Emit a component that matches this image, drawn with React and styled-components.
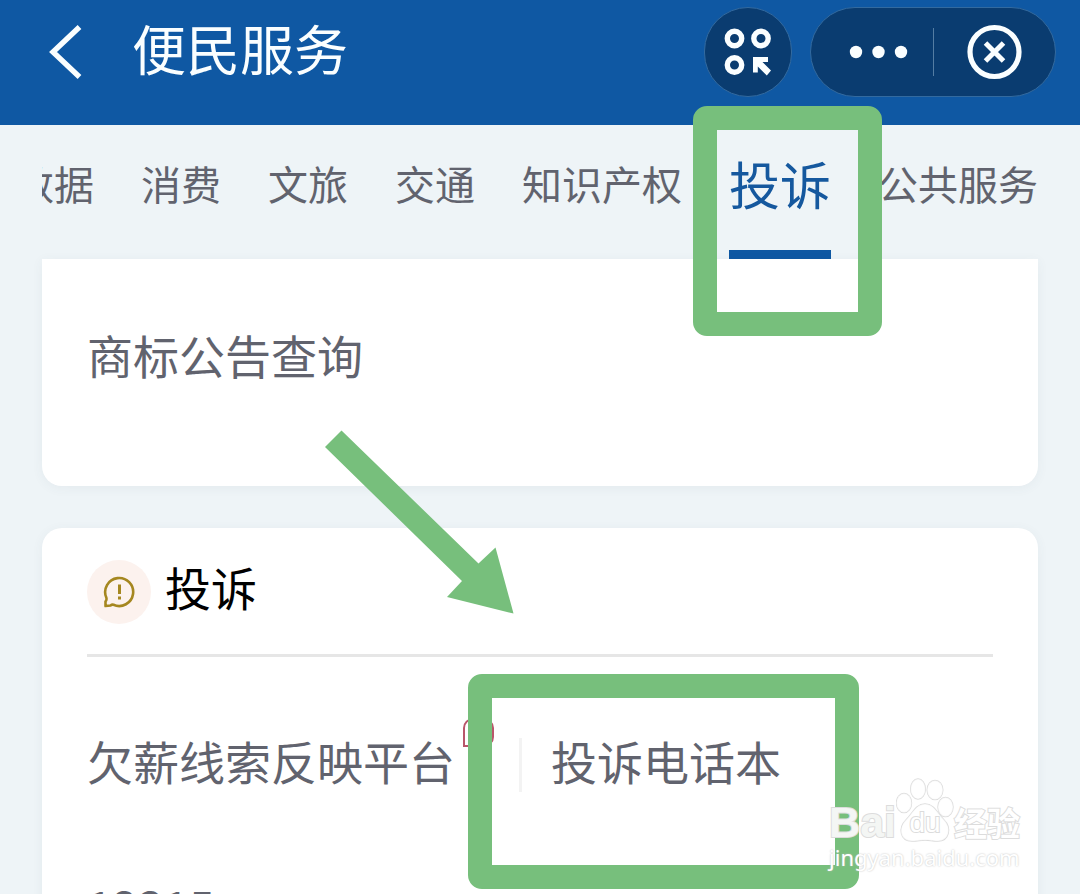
import React from 'react';
import styled, { createGlobalStyle } from 'styled-components';

const TABS = ['数据', '消费', '文旅', '交通', '知识产权', '投诉', '公共服务'];
const ACTIVE_TAB = '投诉';

const BackIcon = () => (
  <svg width="36" height="56" viewBox="0 0 36 56" fill="none" stroke="currentColor" strokeWidth="5.4">
    <path d="M31.500 3 L5 28 L31.500 53" />
  </svg>
);

const ScanIcon = () => (
  <svg width="48" height="48" viewBox="0 0 48 48" fill="none" stroke="currentColor" strokeWidth="5.4">
    <circle cx="10.500" cy="10.500" r="7.200" />
    <circle cx="37" cy="10.500" r="7.200" />
    <circle cx="10.500" cy="37" r="7.200" />
    <path
      d="M29 29 H44 V34 H38.500 L47 42.500 L42.800 47.500 L33.800 38.500 V44.500 H29 Z"
      fill="currentColor"
      stroke="none"
    />
  </svg>
);

const MoreIcon = () => (
  <svg width="60" height="14" viewBox="0 0 60 14" fill="currentColor">
    <circle cx="7" cy="7" r="6.2" />
    <circle cx="29.5" cy="7" r="6.2" />
    <circle cx="52" cy="7" r="6.2" />
  </svg>
);

const CloseIcon = () => (
  <svg width="56" height="56" viewBox="0 0 56 56" fill="none" stroke="currentColor">
    <circle cx="28.5" cy="28" r="24.5" strokeWidth="5.2" />
    <path d="M19.500 19 L37.500 37 M37.500 19 L19.500 37" strokeWidth="5" />
  </svg>
);

const ComplaintIcon = () => (
  <svg width="34" height="34" viewBox="0 0 34 34" fill="none" stroke="#a58720" strokeWidth="2.6">
    <path d="M3.500 31 V26.500 Q5 25 4.300 22.500 A14 14 0 1 1 11.500 29.800 Q10 29.300 8.500 30.500 Z" strokeLinejoin="round" />
    <path d="M17.500 9.500 V19" strokeWidth="3" />
    <path d="M17.500 21.500 V24.500" strokeWidth="3" />
  </svg>
);

const Arrow = () => (
  <svg width="190" height="184" viewBox="0 0 190 184" fill="#77bf7c">
    <path d="M16.500 0.500 L153.500 133.500 L170.500 117.500 L188.500 183.500 L122 167 L137 151 L0 17 Z" />
  </svg>
);

const Paw = () => (
  <svg width="58" height="66" viewBox="0 0 58 66" fill="currentColor" stroke="#dcdcdc" strokeWidth="1.4">
    <ellipse cx="8" cy="26" rx="7.500" ry="9.500" />
    <ellipse cx="22" cy="12" rx="7.300" ry="10" />
    <ellipse cx="39" cy="13" rx="7.800" ry="9.500" />
    <ellipse cx="49.500" cy="30" rx="7.500" ry="9.500" />
    <path d="M29 27 C38 27 41 36 48 43 C56 51 53 64 42 64 C36 64 34 63 29 63 C24 63 22 64 16 64 C4 64 2 51 10 43 C17 36 20 27 29 27 Z" />
  </svg>
);

const App = () => {
  return (
    <Page>
      <GlobalStyle />
      <Header>
        <BackButton type="button" aria-label="返回"><BackIcon /></BackButton>
        <Title>便民服务</Title>
        <RoundButton type="button" aria-label="扫一扫"><ScanIcon /></RoundButton>
        <Capsule>
          <CapsuleButton type="button" aria-label="更多"><MoreIcon /></CapsuleButton>
          <CapsuleDivider />
          <CapsuleButton type="button" aria-label="关闭"><CloseIcon /></CapsuleButton>
        </Capsule>
      </Header>

      <Tabs>
        {TABS.map((tab) => (
          <Tab key={tab} href="#" $active={tab === ACTIVE_TAB}>
            {tab}
            {tab === ACTIVE_TAB && <TabFrame />}
          </Tab>
        ))}
      </Tabs>

      <Sections>
        <Card $continued>
          <ServiceGrid>
            <Service href="#">商标公告查询</Service>
          </ServiceGrid>
        </Card>

        <Card>
          <CardHeader>
            <CardIcon><ComplaintIcon /></CardIcon>
            <CardTitle>投诉</CardTitle>
          </CardHeader>
          <ServiceGrid $spaced>
            <Service href="#">
              欠薪线索反映平台
              <Badge />
            </Service>
            <Service href="#" $divided>
              投诉电话本
              <ServiceFrame />
            </Service>
            <Service href="#">12315</Service>
          </ServiceGrid>
          <ArrowMark><Arrow /></ArrowMark>
        </Card>
      </Sections>

      <Watermark>
        <Brand>
          <BrandText>Bai</BrandText>
          <PawMark>
            <Paw />
            <PawText>du</PawText>
          </PawMark>
          <BrandName>经验</BrandName>
        </Brand>
        <Site>jingyan.baidu.com</Site>
      </Watermark>
    </Page>
  );
};

const GlobalStyle = createGlobalStyle`
  * {
    box-sizing: border-box;
  }

  body {
    margin: 0;
    background: #eef4f7;
    font-family: "Noto Sans CJK SC", sans-serif;
  }

  button {
    display: flex;
    align-items: center;
    justify-content: center;
    padding: 0;
    border: none;
    background: none;
    color: inherit;
    cursor: pointer;
  }

  a {
    color: inherit;
    text-decoration: none;
  }

  svg {
    display: block;
  }
`;

const Page = styled.div`
  position: relative;
  height: 100vh;
  overflow: hidden;
`;

const Header = styled.header`
  display: flex;
  align-items: center;
  padding: 7px 24px 28px 48px;
  background: #0f58a3;
  color: #fafeff;
`;

const BackButton = styled.button`
  width: 36px;
  height: 90px;
`;

const Title = styled.h1`
  flex: 1;
  margin: 0 0 8px 48px;
  font-size: 54px;
  line-height: 80px;
  font-weight: 400;
`;

const RoundButton = styled.button`
  && {
    width: 88px;
    height: 90px;
    border: 1px solid #336a9f;
    border-radius: 45px;
    background: #0a3c70;
  }
`;

const Capsule = styled.div`
  display: flex;
  align-items: center;
  width: 246px;
  height: 90px;
  margin-left: 18px;
  border: 1px solid #336a9f;
  border-radius: 45px;
  background: #0a3c70;
`;

const CapsuleButton = styled.button`
  width: 50%;
  height: 88px;

  &&:first-child {
    padding-left: 14px;
  }
`;

const CapsuleDivider = styled.span`
  flex: none;
  width: 1px;
  height: 48px;
  background: #547da3;
`;

const Tabs = styled.nav`
  display: flex;
  justify-content: flex-end;
  gap: 47px;
  height: 134px;
  margin: 0 42px;
  overflow-x: clip;
  overflow-y: visible;
`;

const Tab = styled.a`
  position: relative;
  flex: none;
  border-bottom: 9px solid ${({ $active }) => ($active ? '#0f58a3' : 'transparent')};
  color: ${({ $active }) => ($active ? '#15589e' : '#61636e')};
  font-size: ${({ $active }) => ($active ? '51px' : '40px')};
  line-height: 116px;
`;

const Frame = styled.span`
  position: absolute;
  z-index: 2;
  border: 24px solid #77bf7c;
  border-radius: 14px;
  pointer-events: none;
`;

const TabFrame = styled(Frame)`
  top: -19px;
  left: -36px;
  right: -51px;
  height: 230px;
`;

const Sections = styled.main`
  display: flex;
  flex-direction: column;
  gap: 42px;
  padding: 0 42px;
`;

const Card = styled.section`
  position: relative;
  padding: ${({ $continued }) => ($continued ? '28px 45px 55px' : '32px 45px 55px')};
  border-radius: ${({ $continued }) => ($continued ? '0 0 20px 20px' : '20px')};
  background: #fff;
  box-shadow: 0 2px 12px rgba(60, 80, 110, 0.06);
`;

const CardHeader = styled.div`
  display: flex;
  align-items: center;
  gap: 14px;
  padding-bottom: 30px;
  border-bottom: 3px solid #e6e6e6;
`;

const CardIcon = styled.span`
  display: flex;
  align-items: center;
  justify-content: center;
  width: 64px;
  height: 64px;
  border-radius: 50%;
  background: #fcf2ee;
`;

const CardTitle = styled.h2`
  margin: 0;
  padding-bottom: 12px;
  color: #000;
  font-size: 46px;
  line-height: 52px;
  font-weight: 400;
`;

const ServiceGrid = styled.div`
  display: grid;
  grid-template-columns: 432fr 474fr;
  grid-auto-rows: 144px;
  row-gap: 1px;
  align-items: center;
  padding-top: ${({ $spaced }) => ($spaced ? '36px' : '0')};
`;

const Service = styled.a`
  position: relative;
  padding-bottom: 10px;
  padding-left: ${({ $divided }) => ($divided ? '29px' : '0')};
  border-left: ${({ $divided }) => ($divided ? '3px solid #f3f3f3' : 'none')};
  color: #61636e;
  font-size: 46px;
  line-height: 44px;
  white-space: nowrap;
`;

const Badge = styled.span`
  position: absolute;
  top: -20px;
  left: 376px;
  width: 31px;
  height: 29px;
  border: 2px solid #b9566a;
  border-radius: 10px 10px 10px 0;
`;

const ServiceFrame = styled(Frame)`
  top: -64px;
  left: -54px;
  width: 391px;
  height: 215px;
`;

const ArrowMark = styled.span`
  position: absolute;
  z-index: 2;
  top: -98px;
  left: 283px;
`;

const Watermark = styled.div`
  position: absolute;
  z-index: 3;
  right: 60px;
  bottom: 23px;
  color: rgba(255, 255, 255, 0.8);
`;

const Brand = styled.div`
  display: flex;
  align-items: flex-end;
  height: 66px;
  font-weight: 700;
  -webkit-text-stroke: 2px #dcdcdc;
  paint-order: stroke fill;
`;

const BrandText = styled.span`
  color: #f4f6f4;
  font-family: "Liberation Sans", sans-serif;
  font-size: 43px;
  line-height: 42px;
`;

const PawMark = styled.span`
  position: relative;
`;

const PawText = styled.span`
  position: absolute;
  inset: 24px 0 0;
  color: #fff;
  font-family: "Liberation Sans", sans-serif;
  font-size: 28px;
  line-height: 44px;
  font-weight: 400;
  text-align: center;
`;

const BrandName = styled.span`
  color: #fff;
  font-size: 33px;
  line-height: 42px;
`;

const Site = styled.div`
  color: #fff;
  font-family: "Noto Sans", sans-serif;
  font-size: 22px;
  line-height: 28px;
  text-shadow: 0 0 2px #bbb;
`;

export default App;
